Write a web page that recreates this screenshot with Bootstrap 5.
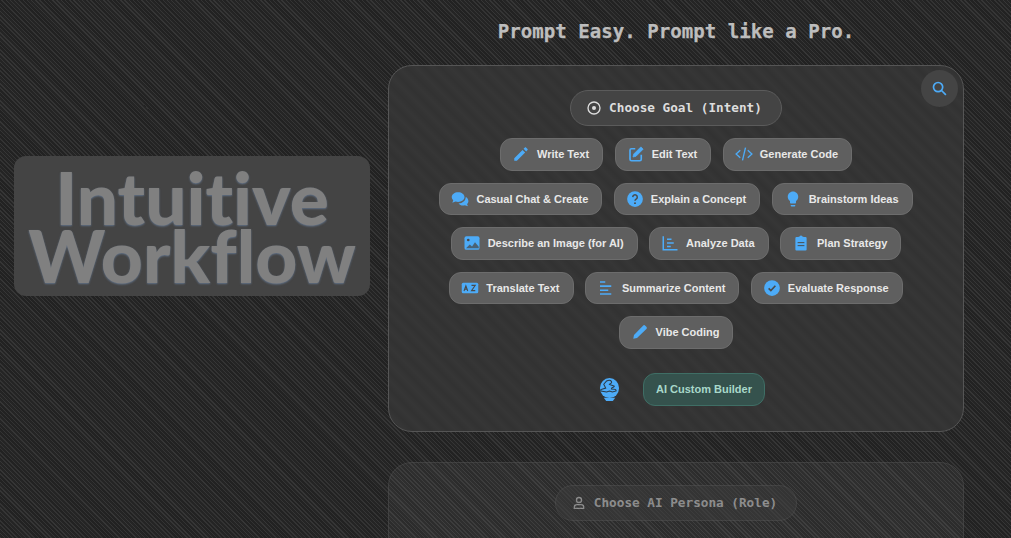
<!DOCTYPE html>
<html lang="en">
<head>
  <meta charset="UTF-8"/>
  <meta name="viewport" content="width=device-width, initial-scale=1.0"/>
  <title>Intuitive Workflow</title>
  <link href="https://cdn.jsdelivr.net/npm/bootstrap@5.3.0/dist/css/bootstrap.min.css" rel="stylesheet"/>
  <style>
    html, body { height: 100%; overflow: hidden; }
    body {
      background-color: #222;
      background-image:
        repeating-linear-gradient(45deg, rgba(255,255,255,.08) 0 1px, transparent 1px 3px),
        repeating-linear-gradient(45deg, rgba(255,255,255,.012) 0 8px, transparent 8px 16px);
      font-family: "Liberation Sans", Arial, sans-serif;
    }
    .left-side { width: 388px; padding: 156px 18px 0 14px; flex: none; }
    .logo-box {
      height: 140px;
      background: #444;
      border-radius: 12px;
      color: #808080;
      font-family: Lato, sans-serif;
      font-weight: 900;
      font-size: 73px;
      line-height: 58px;
      font-variant-ligatures: none;
      text-shadow: 0 1px 2px rgba(120,150,190,.55);
    }
    .right-side { width: 576px; flex: none; }
    .page-title {
      font-family: "DejaVu Sans Mono", monospace;
      font-weight: 700;
      font-size: 19.1px;
      line-height: 24px;
      color: #bdbdbd;
      -webkit-text-stroke: .25px #bdbdbd;
      margin: 20px 0 21px;
      text-align: center;
    }
    .step-panel {
      position: relative;
      border: 1px solid #555;
      border-radius: 24px;
      background-color: #323232;
      background-image: repeating-linear-gradient(45deg, rgba(255,255,255,.018) 0, transparent 6px, rgba(255,255,255,.018) 12px);
      padding: 24px 40px 25px;
      height: 367px;
      margin-bottom: 30px;
    }
    .step-panel.is-dim {
      opacity: .55;
      height: 200px;
      padding-top: 22px;
      background-color: rgba(255,255,255,.09);
      background-image: none;
    }
    .search-btn {
      position: absolute;
      top: 4px;
      right: 5px;
      width: 37px;
      height: 37px;
      border-radius: 50%;
      background: #444;
      border: 0;
      padding: 0;
    }
    .step-pill {
      height: 36px;
      padding: 0 19px 0 15px;
      border: 1px solid #5b5b5b;
      border-radius: 18px;
      background: #444;
      color: #ddd;
      font-family: "DejaVu Sans Mono", monospace;
      font-weight: 700;
      font-size: 12.7px;
      margin-bottom: 12px;
    }
    .step-pill svg { margin-right: -1px; }
    .task-list { gap: 12px 11.5px; }
    .task-btn {
      height: 32.5px;
      padding: 0 13px 0 11px;
      border: 1px solid #6c6c6c;
      border-radius: 12px;
      background: #5f5f5f;
      color: #e8e8e8;
      font-size: 11px;
      font-weight: 700;
      white-space: nowrap;
    }
    .task-btn svg { width: 18px; height: 18px; flex: none; margin-right: 7px; color: #4dabf7; }
    .custom-row { margin-top: 24.5px; margin-left: 12px; gap: 23px; }
    .custom-btn {
      height: 33px;
      padding: 0 12px;
      border: 1px solid #3f6e65;
      border-radius: 12px;
      background: #35524d;
      color: #a8d8ca;
      font-size: 11px;
      font-weight: 700;
    }
  </style>
</head>
<body>
  <div class="d-flex">
    <div class="left-side">
      <div class="logo-box d-flex align-items-center justify-content-center text-center">
        <div>Intuitive<br/>Workflow</div>
      </div>
    </div>

    <div class="right-side">
      <h1 class="page-title">Prompt Easy. Prompt like a Pro.</h1>

      <div class="step-panel">
        <button class="search-btn d-flex align-items-center justify-content-center" type="button" aria-label="Search">
          <svg width="17" height="17" viewBox="0 0 24 24" fill="none" stroke="#4dabf7" stroke-width="2.4"><circle cx="10" cy="10" r="6.500"/><path d="M14.500 14.500L21 21"/></svg>
        </button>

        <div class="d-flex justify-content-center">
          <div class="step-pill d-inline-flex align-items-center gap-2">
            <svg width="16" height="16" viewBox="0 0 24 24" fill="none" stroke="#ddd" stroke-width="2"><circle cx="12" cy="12" r="9"/><circle cx="12" cy="12" r="3" fill="#ddd" stroke="none"/></svg>
            <span>Choose Goal (Intent)</span>
          </div>
        </div>

        <div class="task-list d-flex flex-wrap justify-content-center">
          <button class="task-btn d-inline-flex align-items-center" type="button">
            <svg viewBox="0 0 24 24" fill="currentColor"><path d="M3 17.500V21h3.500L17.500 10 14 6.500 3 17.500zM20.700 6.800c.4-.4.4-1 0-1.400l-2.100-2.100c-.4-.4-1-.4-1.400 0l-1.800 1.800 3.500 3.500 1.800-1.800z"/></svg>
            Write Text</button>
          <button class="task-btn d-inline-flex align-items-center" type="button">
            <svg viewBox="0 0 24 24" fill="none" stroke="currentColor" stroke-width="2.200"><path d="M11 5H6a2 2 0 0 0-2 2v12a2 2 0 0 0 2 2h11a2 2 0 0 0 2-2v-6"/><path d="M18.500 2.500l3 3L12 15l-4 1 1-4z" fill="currentColor" stroke-width="1"/></svg>
            Edit Text</button>
          <button class="task-btn d-inline-flex align-items-center" type="button">
            <svg viewBox="0 0 24 24" fill="none" stroke="currentColor" stroke-width="1.800"><path d="M7 7l-5.500 5 5.500 5M17 7l5.500 5-5.500 5M14 3.500l-4 17"/></svg>
            Generate Code</button>
          <button class="task-btn d-inline-flex align-items-center" type="button">
            <svg viewBox="0 0 24 24" fill="currentColor"><path d="M9.500 3C4.800 3 1 5.800 1 9.400c0 1.600.8 3.100 2 4.200L1.800 17l4.200-1.700c1.100.4 2.300.6 3.500.6 4.700 0 8.500-2.900 8.500-6.500S14.200 3 9.500 3z"/><path d="M19.500 9.500c.1 4.600-4 8-9.500 8.400 1.300 1.700 3.500 2.700 6 2.700.9 0 1.700-.1 2.400-.4l4.100 1.600-1.100-3.200c1.100-1 1.800-2.300 1.800-3.700 0-2.200-1.100-4-2.700-5.400z"/></svg>
            Casual Chat &amp; Create</button>
          <button class="task-btn d-inline-flex align-items-center" type="button">
            <svg viewBox="0 0 24 24"><circle cx="12" cy="12" r="10.500" fill="currentColor"/><path d="M9 9.500a3 3 0 1 1 4.500 2.600c-1 .6-1.500 1.200-1.500 2.200" fill="none" stroke="#4a4a4a" stroke-width="2"/><circle cx="12" cy="17.500" r="1.300" fill="#4a4a4a"/></svg>
            Explain a Concept</button>
          <button class="task-btn d-inline-flex align-items-center" type="button">
            <svg viewBox="0 0 24 24" fill="currentColor"><path d="M9 21c0 .6.400 1 1 1h4c.6 0 1-.4 1-1v-1H9v1zm3-19C8.100 2 5 5.100 5 9c0 2.400 1.200 4.500 3 5.700V17c0 .6.400 1 1 1h6c.6 0 1-.4 1-1v-2.300c1.800-1.200 3-3.300 3-5.700 0-3.900-3.100-7-7-7z"/></svg>
            Brainstorm Ideas</button>
          <button class="task-btn d-inline-flex align-items-center" type="button">
            <svg viewBox="0 0 24 24"><rect x="2" y="3" width="20" height="18" rx="2.500" fill="currentColor"/><circle cx="7" cy="8" r="1.800" fill="#4a4a4a"/><path d="M4 19l5-5 3 2.500 4-5.500 5 6v2z" fill="#4a4a4a" opacity=".75"/></svg>
            Describe an Image (for AI)</button>
          <button class="task-btn d-inline-flex align-items-center" type="button">
            <svg viewBox="0 0 24 24" fill="none" stroke="currentColor" stroke-width="2"><path d="M3 3v18h19M8 7h6M8 12h9M8 16.500h5"/></svg>
            Analyze Data</button>
          <button class="task-btn d-inline-flex align-items-center" type="button">
            <svg viewBox="0 0 24 24"><path d="M6 4h3V3.200h1.200a2 2 0 0 1 3.600 0H15V4h3a1.500 1.500 0 0 1 1.500 1.500v15A1.500 1.500 0 0 1 18 22H6a1.500 1.500 0 0 1-1.500-1.500v-15A1.500 1.500 0 0 1 6 4z" fill="currentColor"/><path d="M7.500 11.500h9M7.500 15.500h9" stroke="#4a4a4a" stroke-width="1.300"/></svg>
            Plan Strategy</button>
          <button class="task-btn d-inline-flex align-items-center" type="button">
            <svg viewBox="0 0 24 24"><rect x="1" y="5" width="22" height="14" rx="2" fill="currentColor"/><path d="M4 16l2.500-7 2.500 7M5 13.500h3M14 8.500h5l-5 7h5" fill="none" stroke="#4a4a4a" stroke-width="1.400"/></svg>
            Translate Text</button>
          <button class="task-btn d-inline-flex align-items-center" type="button">
            <svg viewBox="0 0 24 24" fill="none" stroke="currentColor" stroke-width="2.200"><path d="M4 4h7M4 9.500h15M4 15h11M4 20h15"/></svg>
            Summarize Content</button>
          <button class="task-btn d-inline-flex align-items-center" type="button">
            <svg viewBox="0 0 24 24"><circle cx="12" cy="12" r="10.500" fill="currentColor"/><path d="M7.500 12.500l3 3 6-6.500" fill="none" stroke="#4a4a4a" stroke-width="2.200"/></svg>
            Evaluate Response</button>
          <button class="task-btn d-inline-flex align-items-center" type="button">
            <svg viewBox="0 0 24 24"><path d="M3 21l1-5L16 3.500a2.100 2.100 0 0 1 3 0l1.500 1.500a2.100 2.100 0 0 1 0 3L8 20z" fill="currentColor"/></svg>
            Vibe Coding</button>
        </div>

        <div class="custom-row d-flex justify-content-center align-items-center">
          <svg width="21" height="26" viewBox="0 0 22 26">
            <ellipse cx="11" cy="11" rx="10" ry="10.500" fill="#4dabf7"/>
            <path d="M8 3.500c2-1 4-1 5 .5 1 1.500-1 2.500-2 3 1 1 3 1 5 2-1 2-3 1-3 3 2 0 5 0 5 2l-4 1-3-1-3 1-6-1 0-1.500 5-1.500-2-4z" fill="none" stroke="#2c3a46" stroke-width="1.100"/>
            <path d="M5 21h12l-2.500 3.500h-7z" fill="#4dabf7"/>
          </svg>
          <button class="custom-btn" type="button">AI Custom Builder</button>
        </div>
      </div>

      <div class="step-panel is-dim">
        <div class="d-flex justify-content-center">
          <div class="step-pill d-inline-flex align-items-center gap-2">
            <svg width="16" height="16" viewBox="0 0 24 24" fill="none" stroke="#ddd" stroke-width="2"><circle cx="12" cy="7.500" r="3.800"/><path d="M5 20v-2c0-2 2-3.500 4-3.500h6c2 0 4 1.500 4 3.500v2z"/></svg>
            <span>Choose AI Persona (Role)</span>
          </div>
        </div>
      </div>
    </div>
  </div>
  <script src="https://cdn.jsdelivr.net/npm/bootstrap@5.3.0/dist/js/bootstrap.bundle.min.js"></script>
</body>
</html>
